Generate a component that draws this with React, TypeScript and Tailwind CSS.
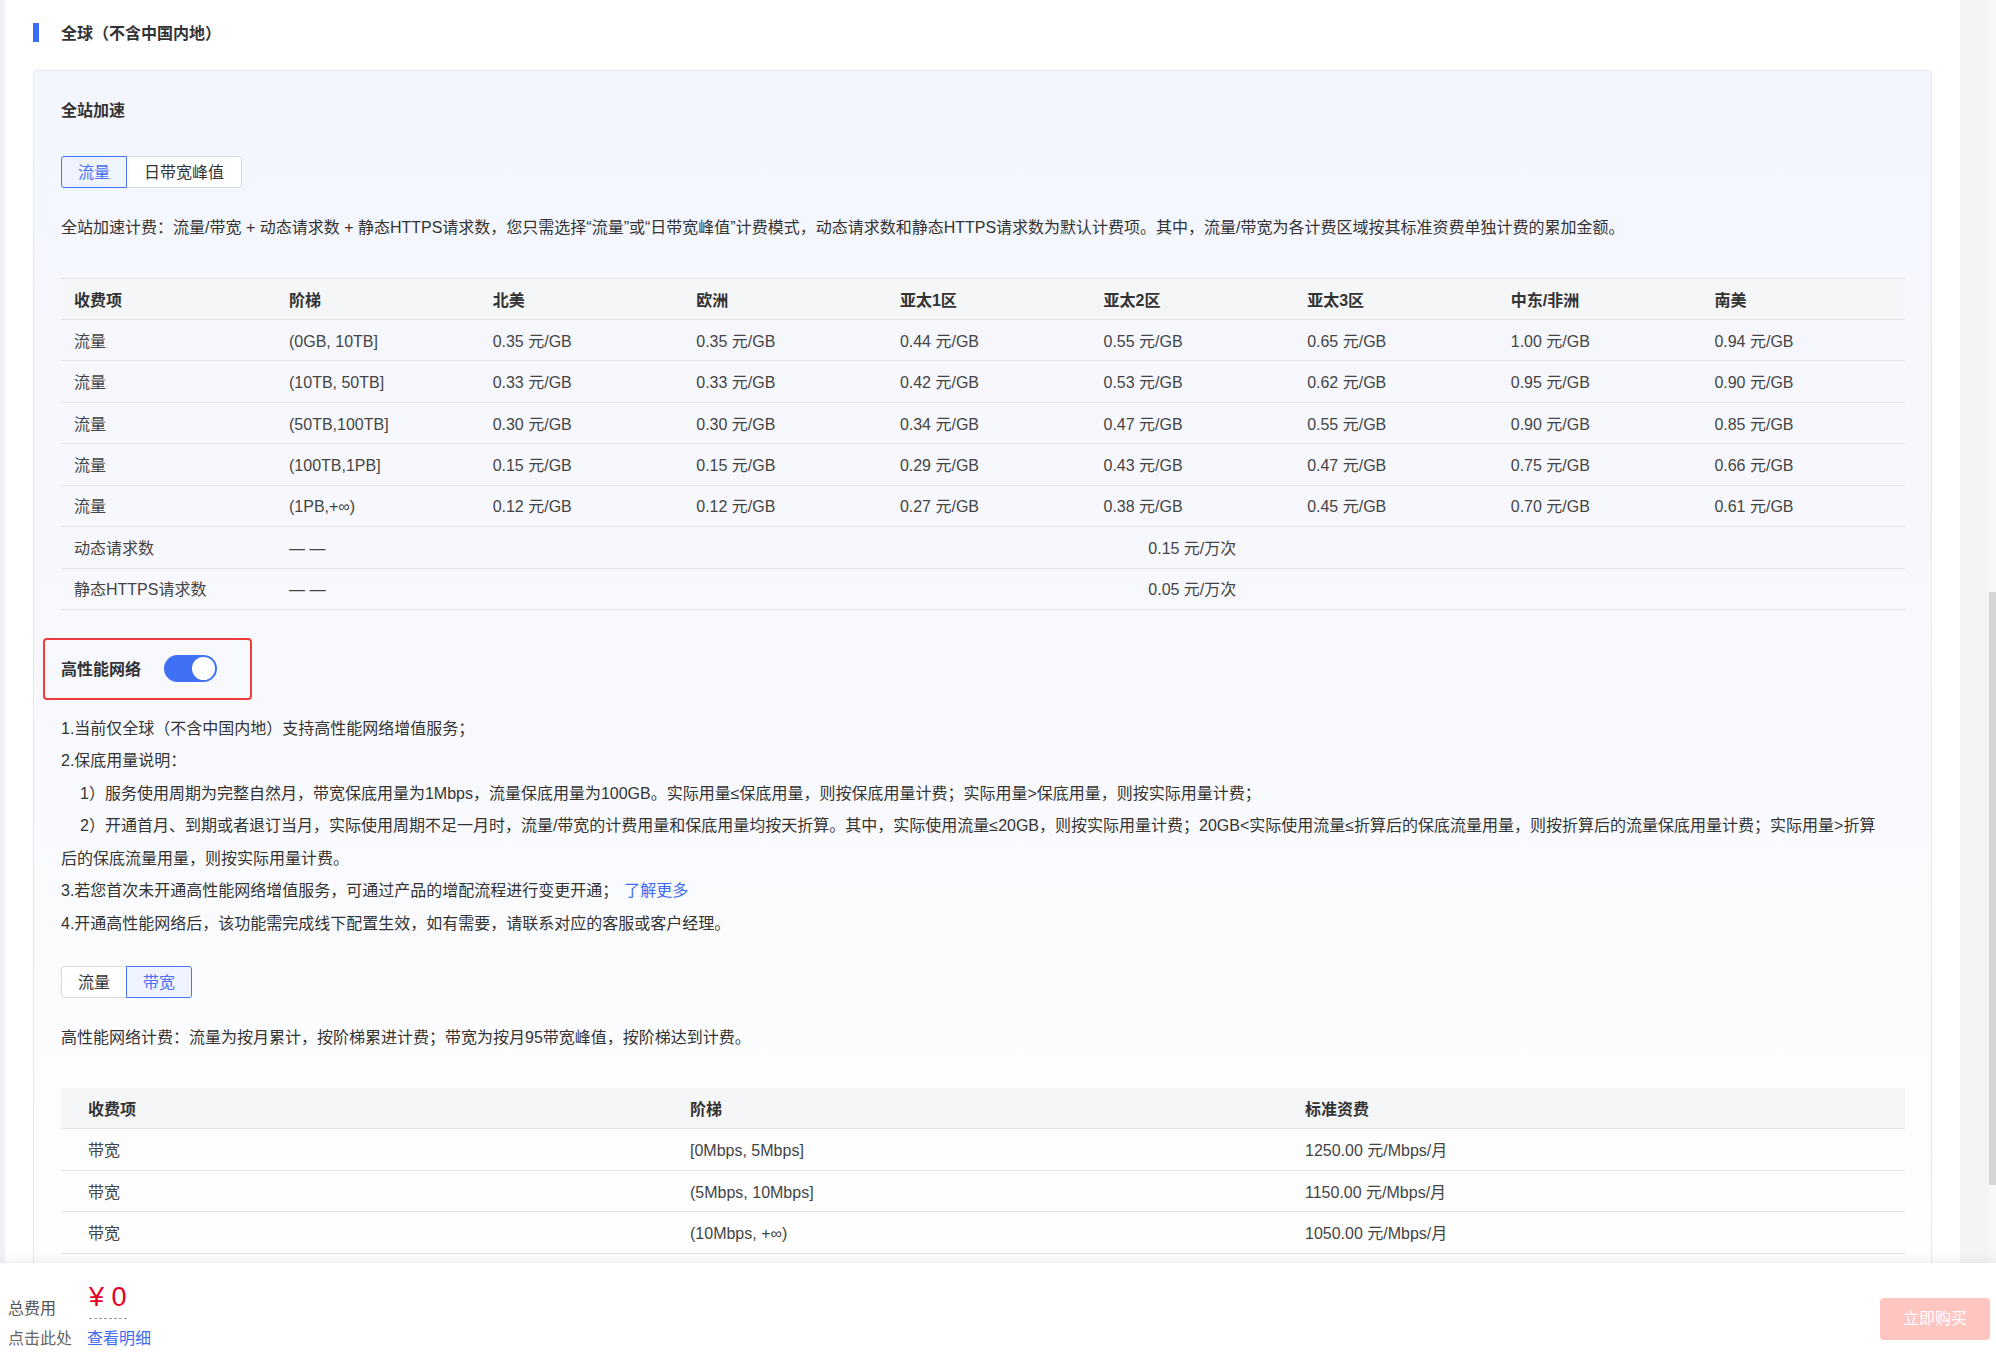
import React from "react";

const regions = ["北美", "欧洲", "亚太1区", "亚太2区", "亚太3区", "中东/非洲", "南美"];
const rows: [string, string[]][] = [
  ["(0GB, 10TB]", ["0.35", "0.35", "0.44", "0.55", "0.65", "1.00", "0.94"]],
  ["(10TB, 50TB]", ["0.33", "0.33", "0.42", "0.53", "0.62", "0.95", "0.90"]],
  ["(50TB,100TB]", ["0.30", "0.30", "0.34", "0.47", "0.55", "0.90", "0.85"]],
  ["(100TB,1PB]", ["0.15", "0.15", "0.29", "0.43", "0.47", "0.75", "0.66"]],
  ["(1PB,+∞)", ["0.12", "0.12", "0.27", "0.38", "0.45", "0.70", "0.61"]],
];
const bwRows: [string, string][] = [
  ["[0Mbps, 5Mbps]", "1250.00 元/Mbps/月"],
  ["(5Mbps, 10Mbps]", "1150.00 元/Mbps/月"],
  ["(10Mbps, +∞)", "1050.00 元/Mbps/月"],
];

function Tabs({ items, active }: { items: [string, number][]; active: number }) {
  return (
    <div className="flex h-[32px]">
      {items.map(([label, w], i) => {
        const isActive = i === active;
        const first = i === 0;
        const last = i === items.length - 1;
        return (
          <div
            key={label}
            style={{ width: w }}
            className={
              "flex items-center justify-center border pt-[2px] text-[16px] " +
              (first ? "rounded-l-[3px] " : "-ml-px ") +
              (last ? "rounded-r-[3px] " : "") +
              (isActive
                ? "relative z-10 border-[#4a74ef] bg-[#eff4ff] text-[#4a6ff0]"
                : "border-[#d9dbe0] bg-white text-[#333]")
            }
          >
            {label}
          </div>
        );
      })}
    </div>
  );
}

export default function App() {
  return (
    <div className="relative h-[1364px] w-[1996px] overflow-hidden bg-white font-['Liberation_Sans','Noto_Sans_CJK_SC',sans-serif] text-[#333]">
      <div className="flex h-full">
        {/* left gutter */}
        <div className="w-[5px] shrink-0 bg-[#f0f2f5]" />
        {/* main */}
        <div className="flex w-[1955px] shrink-0 flex-col">
          <div className="ml-[28px] mt-[23px] flex h-[19px] items-center">
            <div className="h-[19px] w-[6px] bg-[#3b6ef5]" />
            <div className="ml-[22px] pt-[2px] text-[16px] font-bold leading-[19px] text-[#333]">全球（不含中国内地）</div>
          </div>

          <div className="ml-[28px] mt-[28px] w-[1899px] rounded-[4px] border border-[#e2e7f0] bg-[linear-gradient(180deg,#f3f6fd_0%,#f8f9fd_50%,#ffffff_100%)] pb-[60px] pl-[27px] pr-[26px] pt-[28px]">
            <div className="text-[16px] font-bold leading-[24px]">全站加速</div>
            <div className="mt-[33px]">
              <Tabs items={[["流量", 66], ["日带宽峰值", 116]]} active={0} />
            </div>
            <div className="mt-[28px] whitespace-nowrap text-[16px] leading-[24px]">
              全站加速计费：流量/带宽 + 动态请求数 + 静态HTTPS请求数，您只需选择“流量”或“日带宽峰值”计费模式，动态请求数和静态HTTPS请求数为默认计费项。其中，流量/带宽为各计费区域按其标准资费单独计费的累加金额。
            </div>

            {/* table 1 */}
            <div className="mt-[38px] w-[1844px] text-[16px]">
              <div className="grid h-[42px] grid-cols-[215px_repeat(8,1fr)] items-center border-y border-[#e3e5ea] bg-[#f5f6f8] pt-[3px] font-bold text-[#333]">
                <div className="pl-[13px]">收费项</div>
                <div className="pl-[13px]">阶梯</div>
                {regions.map((r) => (
                  <div key={r} className="pl-[13px]">{r}</div>
                ))}
              </div>
              {rows.map(([tier, prices]) => (
                <div key={tier} className="grid h-[41.43px] grid-cols-[215px_repeat(8,1fr)] items-center border-b border-[#e3e5ea] pt-[3px] text-[#444]">
                  <div className="pl-[13px]">流量</div>
                  <div className="pl-[13px]">{tier}</div>
                  {prices.map((p, i) => (
                    <div key={i} className="pl-[13px]">{p} 元/GB</div>
                  ))}
                </div>
              ))}
              {[
                ["动态请求数", "0.15 元/万次"],
                ["静态HTTPS请求数", "0.05 元/万次"],
              ].map(([name, val]) => (
                <div key={name} className="grid h-[41.43px] grid-cols-[215px_repeat(8,1fr)] items-center border-b border-[#e3e5ea] pt-[3px] text-[#444]">
                  <div className="pl-[13px]">{name}</div>
                  <div className="pl-[13px]">— —</div>
                  <div className="col-span-7 text-center">{val}</div>
                </div>
              ))}
            </div>

            {/* high performance network */}
            <div className="-ml-[18px] mt-[28px] flex h-[62px] w-[209px] items-center rounded-[4px] border-2 border-[#ee3b3b] pl-[16px]">
              <span className="pt-[2px] text-[16px] font-bold leading-[24px]">高性能网络</span>
              <div className="ml-[23px] flex h-[27px] w-[53px] items-center justify-end rounded-full bg-[#4070f4] pr-[2px]">
                <div className="h-[23px] w-[23px] rounded-full bg-white" />
              </div>
            </div>

            <div className="mt-[13px] text-[16px] leading-[32.5px] text-[#333]">
              <div>1.当前仅全球（不含中国内地）支持高性能网络增值服务；</div>
              <div>2.保底用量说明：</div>
              <div className="indent-[19px]">1）服务使用周期为完整自然月，带宽保底用量为1Mbps，流量保底用量为100GB。实际用量≤保底用量，则按保底用量计费；实际用量&gt;保底用量，则按实际用量计费；</div>
              <div className="indent-[19px]">
                <span className="whitespace-nowrap">2）开通首月、到期或者退订当月，实际使用周期不足一月时，流量/带宽的计费用量和保底用量均按天折算。其中，实际使用流量≤20GB，则按实际用量计费；20GB&lt;实际使用流量≤折算后的保底流量用量，则按折算后的流量保底用量计费；实际用量&gt;折算</span>
                <br />
                <span>后的保底流量用量，则按实际用量计费。</span>
              </div>
              <div>
                3.若您首次未开通高性能网络增值服务，可通过产品的增配流程进行变更开通；<span className="ml-[6px] text-[#3d6cf0]">了解更多</span>
              </div>
              <div>4.开通高性能网络后，该功能需完成线下配置生效，如有需要，请联系对应的客服或客户经理。</div>
            </div>

            <div className="mt-[26px]">
              <Tabs items={[["流量", 66], ["带宽", 66]]} active={1} />
            </div>
            <div className="mt-[28px] text-[16px] leading-[24px]">
              高性能网络计费：流量为按月累计，按阶梯累进计费；带宽为按月95带宽峰值，按阶梯达到计费。
            </div>

            {/* table 2 */}
            <div className="mt-[38px] w-[1844px] text-[16px]">
              <div className="grid h-[41px] grid-cols-[602px_615px_1fr] items-center border-b border-[#e3e5ea] bg-[#f5f6f8] pt-[3px] font-bold text-[#333]">
                <div className="pl-[27px]">收费项</div>
                <div className="pl-[27px]">阶梯</div>
                <div className="pl-[27px]">标准资费</div>
              </div>
              {bwRows.map(([tier, price]) => (
                <div key={tier} className="grid h-[41.5px] grid-cols-[602px_615px_1fr] items-center border-b border-[#e3e5ea] pt-[3px] text-[#444]">
                  <div className="pl-[27px]">带宽</div>
                  <div className="pl-[27px]">{tier}</div>
                  <div className="pl-[27px]">{price}</div>
                </div>
              ))}
            </div>
          </div>
        </div>
        {/* right gray area */}
        <div className="w-[29px] shrink-0 bg-[#f3f4f5]" />
        {/* scrollbar */}
        <div className="flex w-[7px] shrink-0 flex-col bg-[#f7f7f9]">
          <div className="h-[592px]" />
          <div className="h-[593px] bg-[#d6d6d6]" />
        </div>
      </div>

      {/* fixed footer */}
      <div className="absolute bottom-0 left-0 right-0 flex h-[101px] justify-between bg-white shadow-[0_-4px_10px_rgba(0,0,0,0.06)]">
        <div className="pl-[8px] pt-[19px]">
          <div className="flex items-end">
            <div className="w-[81px] text-[16px] leading-[20px] text-[#555]">总费用</div>
            <div className="border-b border-dashed border-[#9a9a9a] pb-[6px] text-[27px] leading-[30px] text-[#e60026]">¥ 0</div>
          </div>
          <div className="mt-[10px] flex text-[16px] leading-[20px]">
            <div className="w-[79px] text-[#666]">点击此处</div>
            <div className="text-[#3d6cf0]">查看明细</div>
          </div>
        </div>
        <div className="mr-[6px] mt-[35px] flex h-[42px] w-[110px] items-center justify-center rounded-[4px] bg-[#ffc5c0] text-[16px] text-white">
          立即购买
        </div>
      </div>
    </div>
  );
}
